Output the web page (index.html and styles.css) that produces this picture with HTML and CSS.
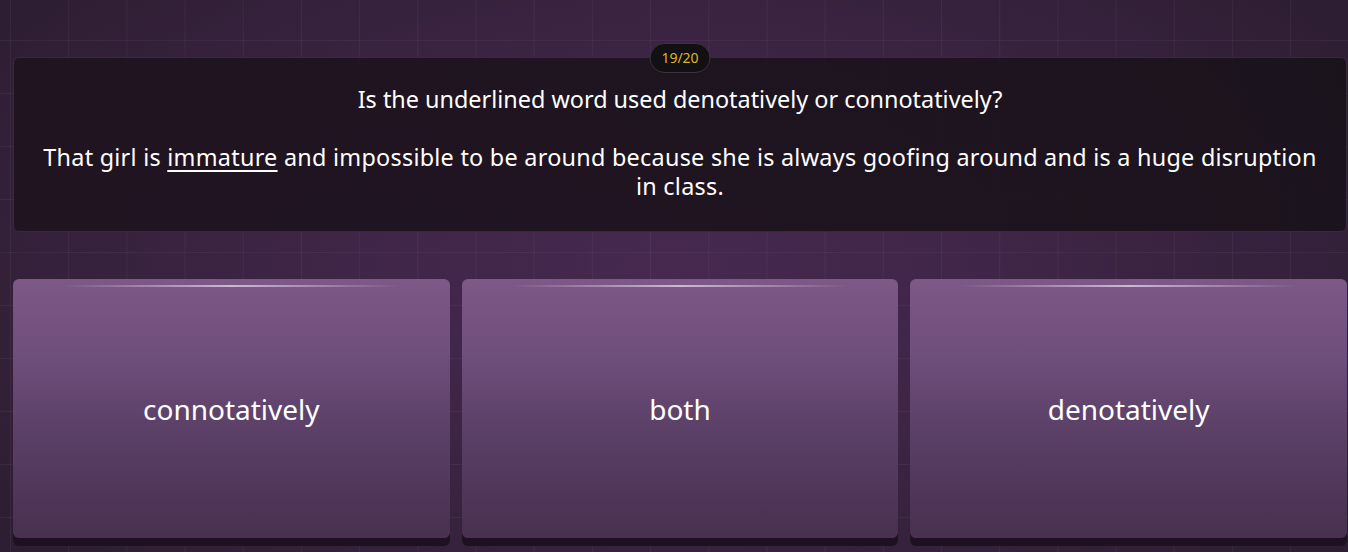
FILE: index.html
```html
<!DOCTYPE html>
<html lang="en">
<head>
<meta charset="utf-8">
<title>Quiz</title>
<link rel="stylesheet" href="styles.css">
</head>
<body>
<div class="page">
  <div class="question-wrap">
    <div class="counter">19/20</div>
    <div class="panel">
      <p class="q">Is the underlined word used denotatively or connotatively?</p>
      <p class="q sentence">That girl is <u>immature</u> and impossible to be around because she is always goofing around and is a huge disruption in class.</p>
    </div>
  </div>
  <div class="answers">
    <div class="card"><span class="shine"></span><span class="label">connotatively</span></div>
    <div class="card"><span class="shine"></span><span class="label">both</span></div>
    <div class="card"><span class="shine"></span><span class="label">denotatively</span></div>
  </div>
</div>
</body>
</html>
```
FILE: styles.css
```css
html, body {
  margin: 0;
  height: 100%;
}
body {
  font-family: "Noto Sans", "DejaVu Sans", sans-serif;
  color: #fff;
  background-color: #33213a;
  background-image:
    linear-gradient(to right, rgba(255,255,255,0.045) 1px, transparent 1px),
    linear-gradient(to bottom, rgba(255,255,255,0.045) 1px, transparent 1px),
    radial-gradient(ellipse 60% 75% at 50% 48%, #47294f 0%, #3e2546 45%, #2e1e33 100%);
  background-size: 58.2px 53px, 58.2px 53px, 100% 100%;
  background-position: 10px 40px, 10px 40px, 0 0;
  overflow: hidden;
}
.page {
  padding: 43px 1px 0 13px;
  box-sizing: border-box;
  height: 552px;
  border-top: 3px solid #2b1c30;
  margin-top: -3px;
}
.question-wrap {
  position: relative;
  padding-top: 14px;
}
.counter {
  position: absolute;
  top: 0;
  left: 50%;
  transform: translateX(-50%);
  width: 59px;
  height: 28px;
  border: 1px solid #3b3438;
  border-radius: 15px;
  background: #121012;
  color: #dcb628;
  font-size: 14px;
  line-height: 28px;
  text-align: center;
  z-index: 2;
}
.panel {
  height: 175px;
  box-sizing: border-box;
  border: 1px solid #372b3a;
  border-radius: 6px;
  background: linear-gradient(to right, rgba(29,19,30,0.9), rgba(25,18,26,0.9));
  display: flex;
  flex-direction: column;
  justify-content: center;
  align-items: center;
  padding: 0 26px 3px;
}
.q {
  margin: 0;
  font-size: 23.4px;
  line-height: 29px;
  text-align: center;
}
.sentence {
  margin-top: 29px;
  letter-spacing: 0.26px;
}
.q u {
  text-decoration-thickness: 2px;
  text-underline-offset: 4px;
}
.answers {
  display: grid;
  grid-template-columns: repeat(3, 1fr);
  gap: 12px;
  margin-top: 47px;
}
.card {
  position: relative;
  height: 259px;
  border-radius: 6px;
  background: linear-gradient(to bottom, #7d5888 0%, #6e4e7a 30%, #5a3f66 60%, #48304f 100%);
  box-shadow: 0 8px 0 #1d1320;
  display: flex;
  align-items: center;
  justify-content: center;
}
.shine {
  position: absolute;
  top: 6px;
  left: 11%;
  right: 11%;
  height: 2px;
  background: linear-gradient(to right, rgba(255,255,255,0), rgba(255,255,255,0.6) 50%, rgba(255,255,255,0));
}
.label {
  font-size: 28px;
  line-height: 34px;
}
```
